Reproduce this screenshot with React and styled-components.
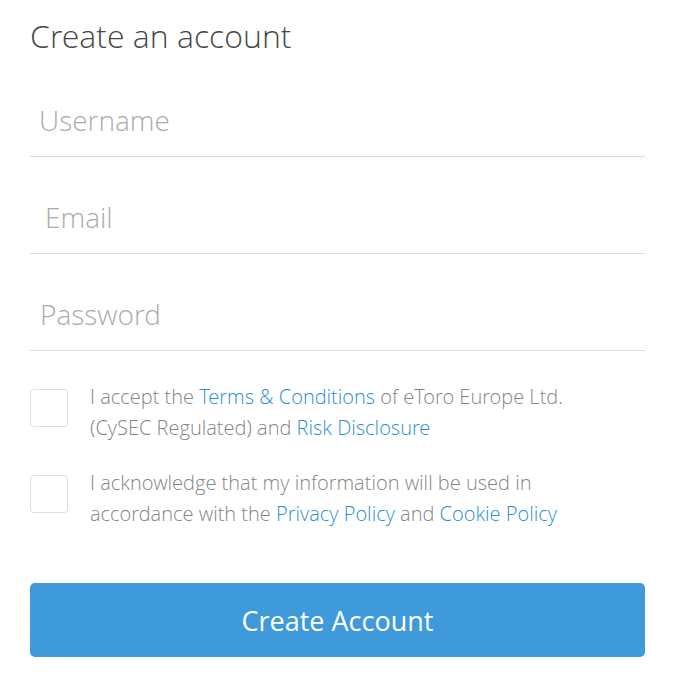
import React from "react";
import styled, { createGlobalStyle } from "styled-components";

const Global = createGlobalStyle`
  html, body { margin: 0; padding: 0; background: #fff; }
  body { font-family: "Open Sans", "Liberation Sans", sans-serif; }
  * { box-sizing: border-box; }
`;

const light = `"Open Sans Light", "Open Sans", "Liberation Sans", sans-serif`;

const Page = styled.form`
  width: 677px;
  padding: 14px 32px 20px 30px;
  display: flex;
  flex-direction: column;
`;

const Title = styled.h1`
  margin: 0;
  font-family: ${light};
  font-size: 32px;
  line-height: 44px;
  font-weight: 300;
  color: #474747;
`;

const Field = styled.input`
  display: block;
  width: 100%;
  height: 73px;
  margin-top: ${(p) => p.$top}px;
  padding: 0 0 0 ${(p) => p.$indent}px;
  border: none;
  border-bottom: 1px solid #dcdcdc;
  outline: none;
  background: transparent;
  font-family: ${light};
  font-size: 28px;
  font-weight: 300;
  color: #444;
  &::placeholder { color: #ababab; }
`;

const Consents = styled.div`
  display: flex;
  flex-direction: column;
  gap: 24px;
  margin-top: 30px;
`;

const Row = styled.label`
  display: flex;
  align-items: flex-start;
  gap: 22px;
`;

const Box = styled.input.attrs({ type: "checkbox" })`
  appearance: none;
  flex: 0 0 38px;
  width: 38px;
  height: 38px;
  margin: 8px 0 0 0;
  border: 1px solid #dedede;
  border-radius: 4px;
  background: #fff;
`;

const Text = styled.span`
  max-width: 500px;
  font-family: ${light};
  font-size: 20px;
  line-height: 31px;
  font-weight: 300;
  color: #858585;
`;

const Link = styled.a`
  color: #2a90cf;
  text-decoration: none;
`;

const Button = styled.button`
  margin-top: 54px;
  height: 74px;
  width: 100%;
  border: none;
  border-radius: 5px;
  background: #3f9adb;
  color: #fff;
  font-family: "Open Sans", "Liberation Sans", sans-serif;
  font-size: 27px;
  font-weight: 400;
  cursor: pointer;
`;

export default function App() {
  return (
    <>
      <Global />
      <Page onSubmit={(e) => e.preventDefault()}>
        <Title>Create an account</Title>
        <Field $top={26} $indent={9} placeholder="Username" />
        <Field $top={24} $indent={15} placeholder="Email" />
        <Field $top={24} $indent={10} type="password" placeholder="Password" />
        <Consents>
          <Row>
            <Box />
            <Text>
              I accept the <Link href="#">Terms &amp; Conditions</Link> of eToro Europe Ltd.
              (CySEC Regulated) and <Link href="#">Risk Disclosure</Link>
            </Text>
          </Row>
          <Row>
            <Box />
            <Text>
              I acknowledge that my information will be used in accordance with the{" "}
              <Link href="#">Privacy Policy</Link> and <Link href="#">Cookie Policy</Link>
            </Text>
          </Row>
        </Consents>
        <Button type="submit">Create Account</Button>
      </Page>
    </>
  );
}
